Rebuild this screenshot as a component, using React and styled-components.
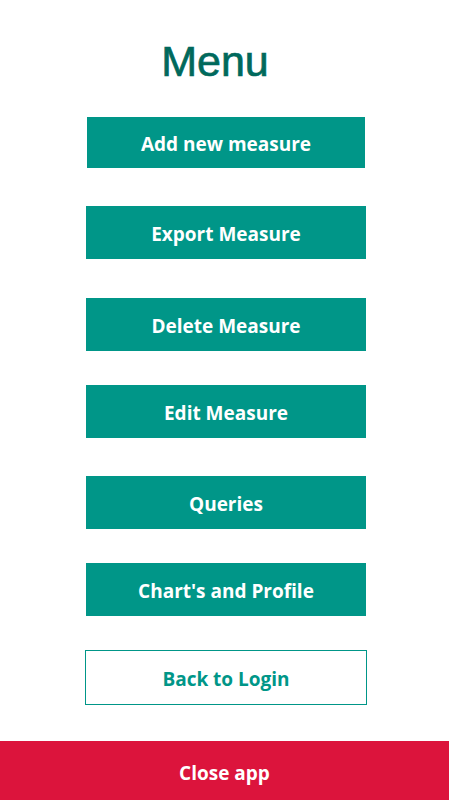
import React from "react";
import styled, { createGlobalStyle } from "styled-components";

const Global = createGlobalStyle`
  html, body { margin: 0; padding: 0; background: #ffffff; }
  body { font-family: "Open Sans", "Noto Sans", sans-serif; }
`;

const Page = styled.div`
  display: flex;
  flex-direction: column;
  width: 100%;
`;

const Menu = styled.nav`
  display: flex;
  flex-direction: column;
  align-items: center;
  padding-left: 3px;
`;

const Title = styled.h1`
  margin: 40px 22px 0 0;
  font-family: "Liberation Sans", Arial, sans-serif;
  font-weight: 400;
  font-size: 43px;
  line-height: 43px;
  color: #00695c;
  -webkit-text-stroke: 0.7px #00695c;
`;

const MenuButton = styled.button`
  box-sizing: border-box;
  margin-top: ${(p) => p.$mt}px;
  width: ${(p) => p.$w || 280}px;
  height: ${(p) => p.$h || 53}px;
  border: none;
  background: #009688;
  color: #ffffff;
  font-family: "Open Sans", "Noto Sans", sans-serif;
  font-weight: 700;
  font-size: 19px;
  display: flex;
  align-items: center;
  justify-content: center;
  padding: 2px 0 0;
  cursor: pointer;
`;

const OutlineButton = styled(MenuButton)`
  background: #ffffff;
  color: #009688;
  border: 1px solid #009688;
`;

const CloseBar = styled.button`
  margin-top: 36px;
  width: 100%;
  height: 64px;
  border: none;
  background: #dc143c;
  color: #ffffff;
  font-family: "Open Sans", "Noto Sans", sans-serif;
  font-weight: 700;
  font-size: 19px;
  display: flex;
  align-items: center;
  justify-content: center;
  padding: 0;
`;

const items = [
  { label: "Add new measure", mt: 34, w: 278, h: 51 },
  { label: "Export Measure", mt: 38 },
  { label: "Delete Measure", mt: 39 },
  { label: "Edit Measure", mt: 34 },
  { label: "Queries", mt: 38 },
  { label: "Chart's and Profile", mt: 34 },
];

export default function App() {
  return (
    <Page>
      <Global />
      <Menu>
        <Title>Menu</Title>
        {items.map((it) => (
          <MenuButton key={it.label} $mt={it.mt} $w={it.w} $h={it.h}>
            {it.label}
          </MenuButton>
        ))}
        <OutlineButton $mt={34} $w={282} $h={55}>
          Back to Login
        </OutlineButton>
      </Menu>
      <CloseBar>Close app</CloseBar>
    </Page>
  );
}
